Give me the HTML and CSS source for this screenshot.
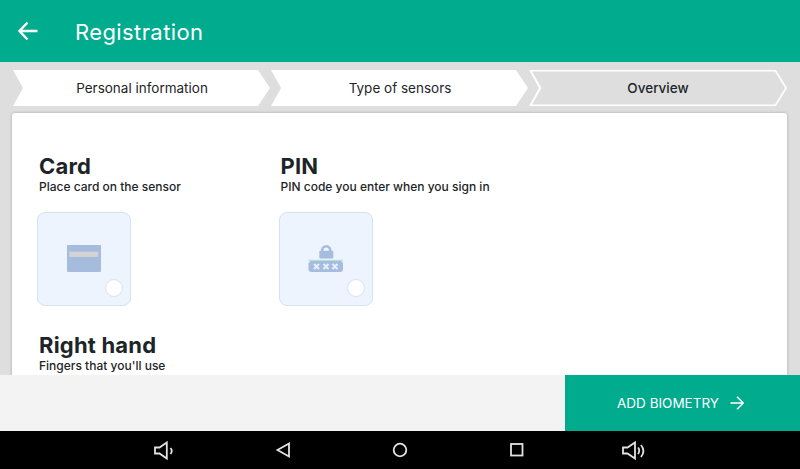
FILE: index.html
```html
<!DOCTYPE html>
<html lang="en">
<head>
    <meta charset="UTF-8">
    <title>Registration</title>
    <link rel="stylesheet" href="styles.css">
</head>
<body>
    <header class="topbar">
        <svg class="back-icon" width="24" height="24" viewBox="0 0 24 24"><path d="M21.500 12H3.500M11.500 3.500 3.500 12l8 8.500" fill="none" stroke="#fff" stroke-width="2.400"/></svg>
        <h1>Registration</h1>
    </header>

    <main class="content">
        <div class="steps">
            <div class="step">Personal information</div>
            <div class="step">Type of sensors</div>
            <div class="step active"><span>Overview</span></div>
        </div>

        <section class="card">
            <div class="options">
                <div class="option">
                    <h2>Card</h2>
                    <p>Place card on the sensor</p>
                    <div class="tile">
                        <svg width="36" height="28" viewBox="0 0 36 28">
                            <rect x="1" y="0" width="34" height="27" rx="1" fill="#a6bcdf"/>
                            <rect x="3.300" y="6.700" width="29" height="5.300" fill="#d3d3d3"/>
                        </svg>
                        <span class="radio"></span>
                    </div>
                </div>
                <div class="option">
                    <h2>PIN</h2>
                    <p>PIN code you enter when you sign in</p>
                    <div class="tile">
                        <svg width="36" height="28" viewBox="0 0 36 28">
                            <path d="M14.200 7V5.300a4 4 0 0 1 8 0V7" fill="none" stroke="#a6bcdf" stroke-width="2.600"/>
                            <rect x="11.300" y="5.700" width="14" height="7.800" rx="1" fill="#a6bcdf"/>
                            <rect x="0.500" y="14.800" width="34.500" height="1.200" fill="#b5e0d6"/>
                            <rect x="0.500" y="16" width="34.500" height="11" rx="3" fill="#a6bcdf"/>
                            <path d="M6 19l5 5M11 19l-5 5M15.500 19l5 5M20.500 19l-5 5M24.500 19l5 5M29.500 19l-5 5" stroke="#e8f0fb" stroke-width="2"/>
                        </svg>
                        <span class="radio"></span>
                    </div>
                </div>
            </div>
            <h2>Right hand</h2>
            <p>Fingers that you'll use</p>
        </section>
    </main>

    <footer class="actions">
        <button class="add-btn">
            ADD BIOMETRY
            <svg width="16" height="16" viewBox="0 0 16 16"><path d="M1.500 8H14M8 1.800 14.200 8 8 14.200" fill="none" stroke="#fff" stroke-width="1.500"/></svg>
        </button>
    </footer>

    <nav class="navbar">
        <svg width="24" height="24" viewBox="0 0 24 24" fill="none" stroke="#e2e2e2" stroke-width="1.800"><path d="M1 9.500h4.500L12.800 4.500v16l-7.300-5H1zM16.500 10q2.500 3 0 6"/></svg>
        <svg width="24" height="24" viewBox="0 0 24 24" fill="none" stroke="#e2e2e2" stroke-width="1.800"><path d="M18 5.500v13L6.500 12z"/></svg>
        <svg width="24" height="24" viewBox="0 0 24 24" fill="none" stroke="#e2e2e2" stroke-width="1.800"><circle cx="12" cy="12" r="6.300"/></svg>
        <svg width="24" height="24" viewBox="0 0 24 24" fill="none" stroke="#e2e2e2" stroke-width="1.800"><rect x="6" y="6" width="11.500" height="11.500"/></svg>
        <svg width="24" height="24" viewBox="0 0 24 24" fill="none" stroke="#e2e2e2" stroke-width="1.800"><path d="M1 9.500h4.500L13 4.500v16l-7.500-5H1zM16 9.500q2.500 3 0 6.500M19 7q4.800 6 0 12"/></svg>
    </nav>
</body>
</html>
```

FILE: styles.css
```css
* {
    box-sizing: border-box;
}

body {
    font-family: Inter, "Open Sans", sans-serif;
    margin: 0;
    height: 469px;
    display: flex;
    flex-direction: column;
    overflow: hidden;
    background-color: #dedede;
    color: #1d2528;
}

.topbar {
    height: 62px;
    flex: none;
    display: flex;
    align-items: center;
    padding: 0 0 0 16px;
    background-color: #00ab8e;
    color: #fff;
}

.topbar h1 {
    font-size: 22px;
    font-weight: 400;
    margin: 2px 0 0 35px;
    letter-spacing: 0.4px;
}

.content {
    flex: 1;
    min-height: 0;
    overflow: hidden;
    border-top: 1px solid #cfe3dd;
    padding: 7px 13px 0 12px;
}

.steps {
    display: flex;
    padding-left: 1px;
}

.step {
    position: relative;
    width: 258px;
    height: 36px;
    flex: none;
    display: flex;
    align-items: center;
    justify-content: center;
    font-size: 13.500px;
    background-color: #fff;
    clip-path: polygon(0 0, 245px 0, 257px 18px, 245px 36px, 0 36px, 10px 18px);
}

.step.active {
    font-weight: 500;
    clip-path: polygon(0 0, 247px 0, 258px 18px, 247px 36px, 0 36px, 10px 18px);
}

.step.active::before {
    content: "";
    position: absolute;
    inset: 0;
    background-color: #dedede;
    clip-path: polygon(3px 1.500px, 246px 1.500px, 256px 18px, 246px 34.500px, 3px 34.500px, 12.500px 18px);
}

.step.active span {
    position: relative;
}

.card {
    margin-top: 7px;
    padding: 40px 27px 0;
    height: 320px;
    background-color: #fff;
    border-radius: 3px;
    box-shadow: 0 0 3px rgba(0, 0, 0, 0.25);
}

.options {
    display: flex;
    margin-bottom: 26px;
}

.option {
    width: 241.500px;
}

.card h2 {
    font-size: 22px;
    line-height: 27px;
    font-weight: 700;
    letter-spacing: 0.2px;
    margin: 0;
}

.card p {
    font-size: 12px;
    font-weight: 500;
    line-height: 16px;
    margin: -1px 0 0;
}

.tile {
    position: relative;
    width: 94px;
    height: 94px;
    margin: 17px 0 0 -2px;
    display: flex;
    align-items: center;
    justify-content: center;
    background-color: #edf4fe;
    border: 1px solid #d3e3f2;
    border-radius: 8px;
}

.radio {
    position: absolute;
    right: 7px;
    bottom: 8.500px;
    width: 18px;
    height: 18px;
    background-color: #fff;
    border: 1px solid #d3e3f2;
    border-radius: 50%;
}

.actions {
    height: 56px;
    flex: none;
    display: flex;
    justify-content: flex-end;
    background-color: #f3f3f3;
}

.add-btn {
    width: 235px;
    display: flex;
    align-items: center;
    justify-content: center;
    gap: 10px;
    padding: 0 3px 0 0;
    border: none;
    background-color: #00ab8e;
    color: #fff;
    font-family: inherit;
    font-size: 13.500px;
}

.navbar {
    height: 38px;
    flex: none;
    display: flex;
    align-items: center;
    justify-content: center;
    gap: 93px;
    background-color: #000;
}
```
